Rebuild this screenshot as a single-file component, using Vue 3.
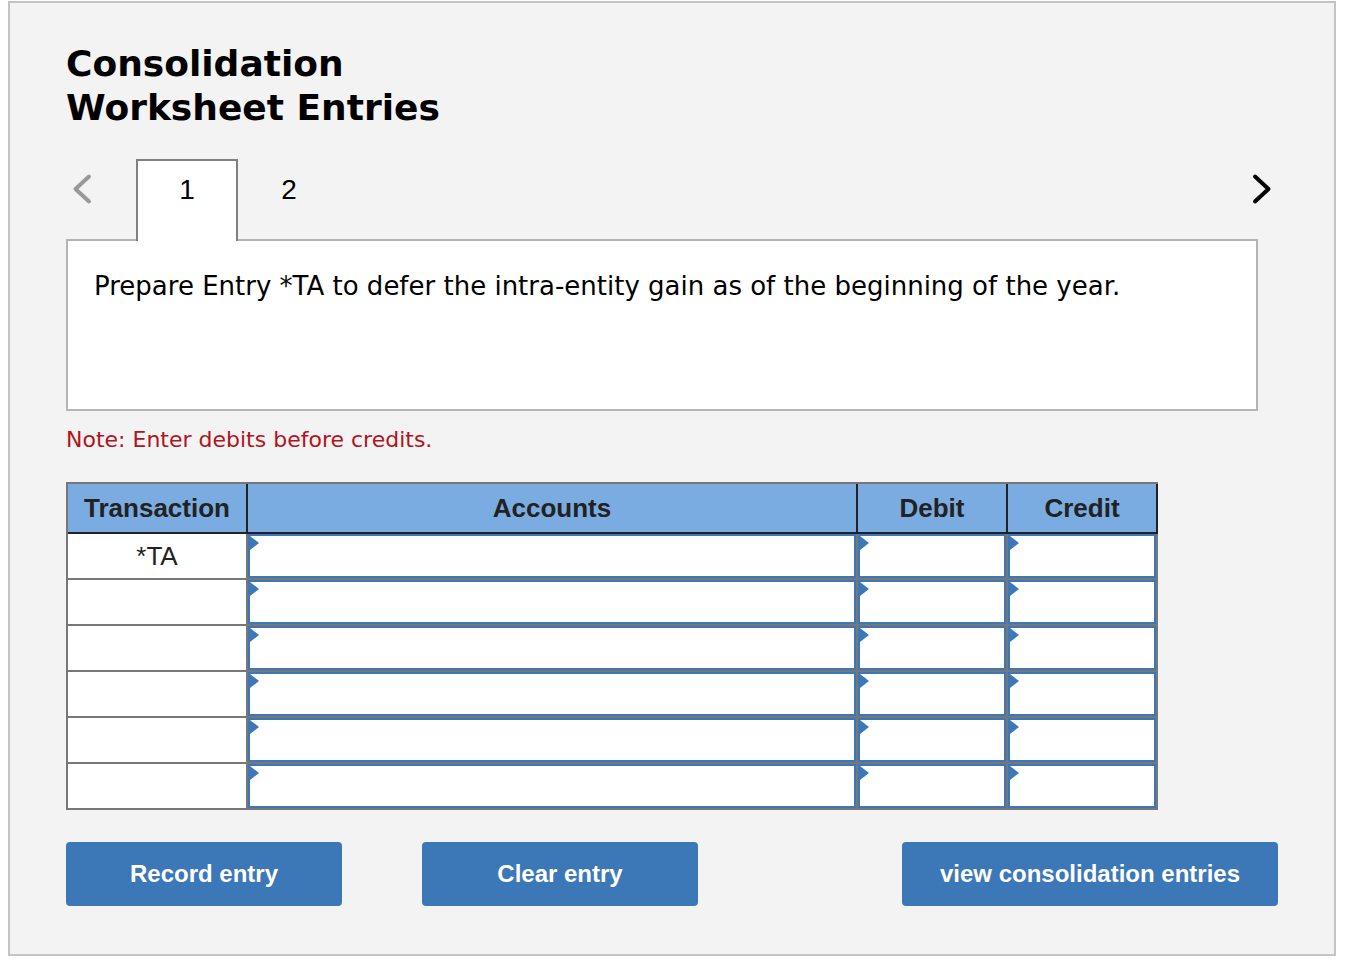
<script setup>
import { ref, reactive } from 'vue'

const tabs = [1, 2]
const active = ref(1)
const columns = ['Accounts', 'Debit', 'Credit']
const rows = reactive(
  ['*TA', '', '', '', '', ''].map((transaction) => ({
    transaction,
    values: { Accounts: '', Debit: '', Credit: '' },
  }))
)

function clearEntry() {
  rows.forEach((row) => columns.forEach((c) => (row.values[c] = '')))
}
</script>

<template>
  <main class="panel">
    <h1 class="title">Consolidation<br />Worksheet Entries</h1>

    <nav class="tabs" aria-label="Entries">
      <button class="arrow prev" type="button" aria-label="Previous entry" disabled>
        <svg width="32" height="32" viewBox="0 0 32 32" aria-hidden="true">
          <path d="M21 3.5 L7.5 16 L21 28.5" />
        </svg>
      </button>
      <button
        v-for="tab in tabs"
        :key="tab"
        type="button"
        class="tab"
        :class="{ active: tab === active }"
        @click="active = tab"
      >{{ tab }}</button>
      <button class="arrow next" type="button" aria-label="Next entry">
        <svg width="32" height="32" viewBox="0 0 32 32" aria-hidden="true">
          <path d="M11 3.5 L24.5 16 L11 28.5" />
        </svg>
      </button>
    </nav>

    <section class="card">
      <p>Prepare Entry *TA to defer the intra-entity gain as of the beginning of the year.</p>
    </section>

    <p class="note">Note: Enter debits before credits.</p>

    <table class="journal">
      <thead>
        <tr>
          <th class="col-transaction" scope="col">Transaction</th>
          <th scope="col">Accounts</th>
          <th class="col-amount" scope="col">Debit</th>
          <th class="col-amount" scope="col">Credit</th>
        </tr>
      </thead>
      <tbody>
        <tr v-for="(row, i) in rows" :key="i">
          <td>{{ row.transaction }}</td>
          <td v-for="column in columns" :key="column" class="entry">
            <input v-model="row.values[column]" type="text" :aria-label="`${column}, row ${i + 1}`" />
          </td>
        </tr>
      </tbody>
    </table>

    <div class="actions">
      <button class="action" type="button">Record entry</button>
      <button class="action" type="button" @click="clearEntry">Clear entry</button>
      <button class="action wide" type="button">view consolidation entries</button>
    </div>
  </main>
</template>

<style>
body {
  background: #fff;
}
</style>

<style scoped>
.panel {
  box-sizing: border-box;
  margin: 1px 10px 16px 8px;
  padding: 39px 56px 48px;
  border: 2px solid #c4c4c4;
  background: #f3f3f3;
  font-family: "Liberation Sans", Arial, sans-serif;
  color: #000;
}

.title {
  margin: 0;
  font: bold 36px/44px "DejaVu Sans", Verdana, sans-serif;
}

.tabs {
  display: flex;
  margin-top: 29px;
}

.tabs button {
  border: 2px solid transparent;
  padding: 0;
  background: none;
  font: 28px/32px "Liberation Sans", Arial, sans-serif;
  color: #000;
}

.tabs .tab {
  width: 102px;
  height: 82px;
  padding-bottom: 20px;
}

.tabs .tab.active {
  position: relative;
  padding-bottom: 22px;
  border-color: #808080;
  border-bottom: 0;
  background: #fff;
}

.arrow {
  display: flex;
  align-items: center;
  height: 60px;
}

.arrow svg {
  display: block;
  fill: none;
  stroke: #000;
  stroke-width: 4;
  stroke-linecap: round;
  stroke-linejoin: round;
}

.prev {
  width: 70px;
}

.prev svg {
  stroke: #999;
}

.next {
  margin-left: auto;
}

.card {
  box-sizing: border-box;
  min-height: 172px;
  margin: -2px 20px 0 0;
  padding: 29px 26px;
  border: 2px solid #b5b5b5;
  background: #fff;
}

.card p {
  margin: 0;
  font: 26px/32px "DejaVu Sans", Verdana, sans-serif;
}

.note {
  margin: 14px 0 27px;
  font: 22px/30px "DejaVu Sans", Verdana, sans-serif;
  color: #b1141b;
}

.journal {
  width: calc(100% - 120px);
  table-layout: fixed;
  border-collapse: separate;
  border-spacing: 0;
  border: solid #777;
  border-width: 2px 0 0 2px;
  font-size: 26px;
  line-height: 30px;
  color: #222;
  text-align: center;
}

.journal th,
.journal td {
  box-sizing: border-box;
  padding: 0;
  border: solid #777;
  border-width: 0 2px 2px 0;
}

.journal th {
  height: 50px;
  border-color: #222;
  background: #7aace2;
}

.journal td {
  height: 46px;
  background: #fff;
}

.col-transaction {
  width: 180px;
}

.col-amount {
  width: 150px;
}

.entry {
  position: relative;
}

.entry::before {
  content: "";
  position: absolute;
  top: 2px;
  left: 2px;
  border: solid transparent;
  border-width: 7px 0 7px 9px;
  border-left-color: #3c77b7;
}

.entry input {
  display: block;
  box-sizing: border-box;
  width: 100%;
  height: 44px;
  padding: 0 12px;
  border: 2px solid #3c77b7;
  border-radius: 0;
  background: #fff;
  font: inherit;
  color: inherit;
  outline: none;
}

.actions {
  display: flex;
  gap: 80px;
  margin-top: 32px;
}

.action {
  width: 276px;
  height: 64px;
  padding: 0;
  border: 0;
  border-radius: 4px;
  background: #3c77b7;
  font: bold 24px/28px "Liberation Sans", Arial, sans-serif;
  color: #fff;
}

.action.wide {
  width: 376px;
  margin-left: auto;
}
</style>
